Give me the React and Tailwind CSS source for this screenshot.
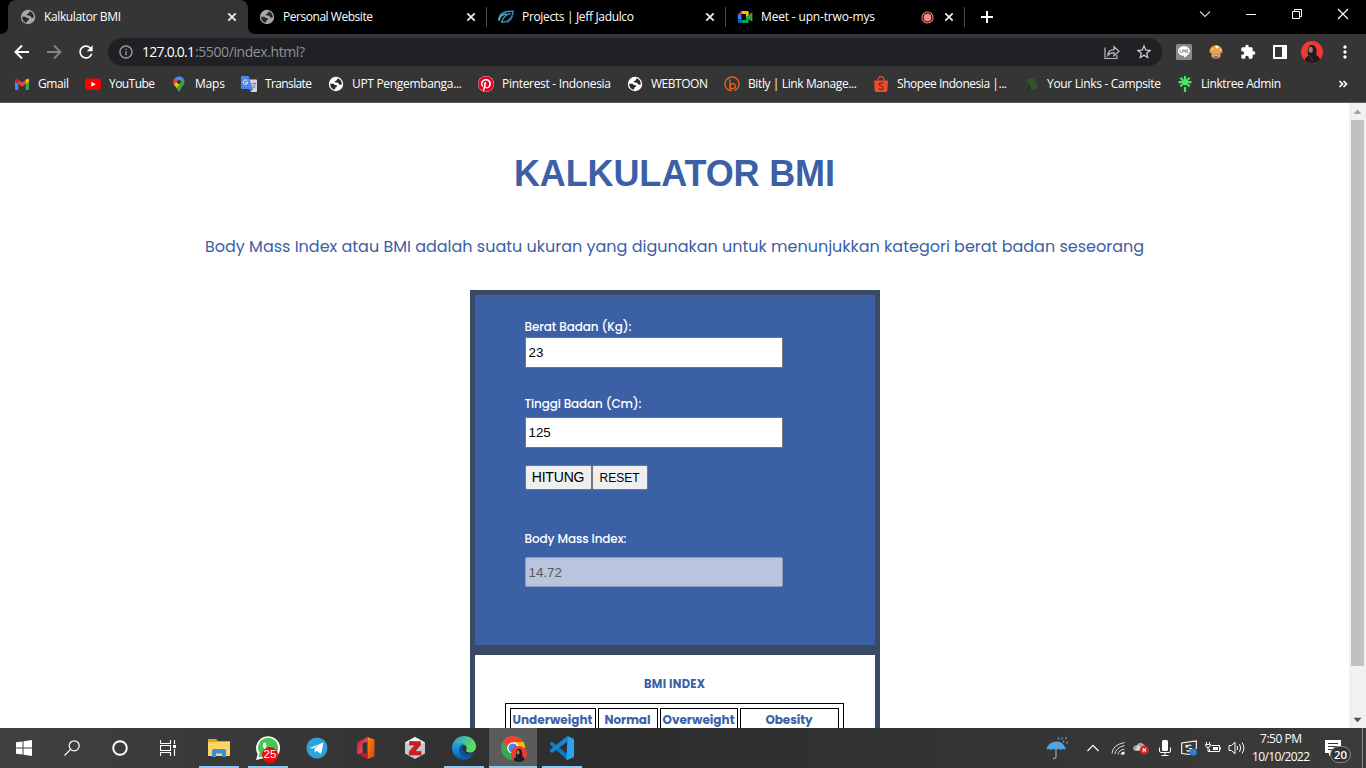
import React, { useLayoutEffect, useRef, useState } from "react";
import { MdStarBorder, MdExtension, MdMoreVert, MdRefresh, MdInfoOutline } from "react-icons/md";
import { FaPinterest, FaWhatsapp } from "react-icons/fa";

const UI = "font-['Segoe_UI','Open_Sans',sans-serif]";
const GEO = "font-[Poppins,Inter,sans-serif]";

// Spreads its text evenly over the width given by the class.
function Fit({ className = "", children }) {
  const box = useRef(null);
  const text = useRef(null);
  const [gap, setGap] = useState(0);
  useLayoutEffect(() => {
    const natural = text.current.getBoundingClientRect().width;
    const n = text.current.textContent.length;
    setGap((box.current.getBoundingClientRect().width - natural) / Math.max(1, n - 1));
  }, []);
  return (
    <span ref={box} className={"block shrink-0 whitespace-nowrap " + className}>
      <span ref={text} style={{ letterSpacing: gap + "px" }}>{children}</span>
    </span>
  );
}

const Globe = ({ className = "" }) => (
  <svg viewBox="0 0 16 16" className={"size-4 shrink-0 " + className}>
    <circle cx="8" cy="8" r="7.200" fill="currentColor" />
    <path d="M9.300 2.300Q13.500 3.500 13.900 8 12.800 9.300 11.200 8.600 10.800 6.600 8.800 6.500L6.800 6.300Q6.300 5 8 4.700 9.600 4.300 9.300 2.300z" fill="#2b2b2b" />
    <path d="M2.100 7.700H5.500Q6.500 9.200 8.500 9.200 9.600 9.600 8.900 10.800 7.200 11 7.300 12.300L6.700 13.800Q2.300 12.700 2.100 7.700z" fill="#2b2b2b" />
  </svg>
);

const Close = () => (
  <svg viewBox="0 0 16 16" className="size-4 shrink-0" stroke="#f1f1f1" strokeWidth="1.7">
    <path d="M4.3 4.3l7.4 7.4M11.7 4.3l-7.4 7.4" />
  </svg>
);

const JeffIcon = () => (
  <svg viewBox="0 0 16 16" className="size-4 shrink-0" fill="none" stroke="#3b9cc4" strokeWidth="1.3">
    <path d="M.6 10.500C1 5 6 2 15.200 2.200C14.500 9 10 13.500 3.500 13.200C5 8 8.500 5.500 12.500 4.500" />
    <path d="M1 12C1.500 8 4 5.300 8.500 5" stroke="#58bdd0" />
    <path d="M9 13.500C12.500 12 14.600 8.500 15 4" stroke="#2f6fb0" />
  </svg>
);

const MeetIcon = () => (
  <svg viewBox="0 0 16 16" className="size-4 shrink-0">
    <path d="M4.500 2H10.500a1.200 1.200 0 0 1 1.200 1.200V8H9V5H4.500z" fill="#ffba00" />
    <path d="M4.500 2v3.500H.8z" fill="#ea4335" />
    <path d="M.8 5.500H4.500v5H.8z" fill="#2684fc" />
    <path d="M.8 10.500H4.500V14H2A1.200 1.200 0 0 1 .8 12.800z" fill="#0066da" />
    <path d="M4.500 11H9V8l2.700-1.500v6.300A1.200 1.200 0 0 1 10.500 14h-6z" fill="#00ac47" />
    <path d="M11.700 6L14.800 3.600q.6-.4.600.3v8.200q0 .7-.6.300L9 8z" fill="#2f9e4d" />
  </svg>
);

const RecordIcon = () => (
  <svg viewBox="0 0 14 14" className="size-[13px] shrink-0">
    <circle cx="7" cy="7" r="6" fill="none" stroke="#f28b82" strokeWidth="1.100" />
    <circle cx="7" cy="7" r="4.200" fill="#f28b82" />
  </svg>
);

function Tab({ icon, title, width, record }) {
  return (
    <div className="flex h-full w-[239px] shrink-0 items-center pl-[11px]">
      {icon}
      <Fit className={"ml-2 text-[12px] leading-4 text-white " + width}>{title}</Fit>
      <div className="ml-auto flex items-center gap-[7px] pr-[7px]">
        {record && <RecordIcon />}
        <Close />
      </div>
      <div className="h-5 w-px bg-[#4a4a4a]" />
    </div>
  );
}

function TabStrip() {
  return (
    <div className="flex h-[34px] shrink-0 bg-black text-white">
      <div className="flex h-full w-2 items-end bg-[#353535]"><div className="size-full rounded-br-[7px] bg-black" /></div>
      <div className="flex h-full w-[240px] items-center rounded-t-[8px] bg-[#353535] pl-3">
        <Globe className="text-[#a3a7ae]" />
        <Fit className="ml-2 w-[77px] text-[12px] leading-4">Kalkulator BMI</Fit>
        <div className="ml-auto pr-2"><Close /></div>
      </div>
      <div className="flex bg-[#353535]"><div className="h-full w-[239px] rounded-bl-[7px] bg-black">
        <Tab icon={<Globe className="text-[#a3a7ae]" />} title="Personal Website" width="w-[90px]" />
      </div></div>
      <Tab icon={<JeffIcon />} title="Projects | Jeff Jadulco" width="w-[112px]" />
      <Tab icon={<MeetIcon />} title="Meet - upn-trwo-mys" width="w-[114px]" record />
      <svg viewBox="0 0 16 16" className="ml-[14px] mt-[9px] size-4" stroke="#fff" strokeWidth="2"><path d="M2 8h12M8 2v12" /></svg>
      <div className="ml-auto flex h-7 items-center">
        <div className="flex w-[46px] justify-center"><svg viewBox="0 0 12 12" className="size-3" fill="none" stroke="#d5d5d5" strokeWidth="1.100"><path d="M1 3.500l5 5 5-5" /></svg></div>
        <div className="flex w-[46px] justify-center"><svg viewBox="0 0 12 12" className="size-3" stroke="#fff"><path d="M1 6.500h10" /></svg></div>
        <div className="flex w-[46px] justify-center"><svg viewBox="0 0 12 12" className="size-3" fill="none" stroke="#fff"><path d="M1.500 3.500h7v7h-7zM3.500 3.500v-2h7v7h-2" /></svg></div>
        <div className="flex w-[46px] justify-center"><svg viewBox="0 0 12 12" className="size-3" stroke="#fff" strokeWidth="1.200"><path d="M1 1l10 10M11 1L1 11" /></svg></div>
      </div>
    </div>
  );
}

const LineIcon = () => (
  <svg viewBox="0 0 16 16" className="size-4">
    <rect width="16" height="16" rx="1.500" fill="#8a8a8a" />
    <path d="M8 2.200c3.300 0 6 2.100 6 4.800 0 2-2.200 4.200-6 6.700v-1.900C4.700 11.800 2 9.700 2 7s2.700-4.800 6-4.800z" fill="#fff" />
    <path d="M4 5.500v3h1.500M6.500 5.500v3M7.800 8.500v-3l1.800 3v-3M12.300 5.700h-1.400v2.700h1.400M10.900 7h1.200" stroke="#777" strokeWidth=".7" fill="none" />
  </svg>
);

const MushroomIcon = () => (
  <svg viewBox="0 0 16 16" className="size-4">
    <path d="M3.500 7h9v4.200a4.500 3.500 0 0 1-9 0z" fill="#e8a878" />
    <path d="M1.500 8C1.500 3.800 4.500 1.200 8 1.200s6.500 2.600 6.500 6.800q0 1-1 1-2-1.600-5.500-1.600T2.500 9q-1 0-1-1z" fill="#f0a035" />
    <circle cx="9" cy="3" r="1.600" fill="#fff3d8" /><circle cx="4.500" cy="5.500" r="1" fill="#ffe0a0" /><circle cx="12.300" cy="5.800" r="1" fill="#ffe0a0" />
    <circle cx="6.200" cy="10" r="1.100" fill="#7f96a0" /><circle cx="9.800" cy="10" r="1.100" fill="#7f96a0" />
    <path d="M5 13q3-1.800 6 0l-1.200 1.500H6z" fill="#a56636" />
  </svg>
);

function Portrait({ className }) {
  return (
    <svg viewBox="0 0 22 22" className={className}>
      <defs><clipPath id="face"><circle cx="11" cy="11" r="11" /></clipPath></defs>
      <g clipPath="url(#face)">
        <rect width="22" height="22" fill="#f0392f" />
        <path d="M3 22q0-5 4-7Q5.500 4 11 3.700q5.200.3 4.500 10.500 4 2 4 7.800z" fill="#1e1b22" />
        <ellipse cx="9.700" cy="8.800" rx="2.100" ry="3" fill="#a87c6d" />
        <path d="M7 14q3 1 5 6" stroke="#41414b" fill="none" />
      </g>
    </svg>
  );
}

function Toolbar() {
  return (
    <div className="flex h-9 shrink-0 items-center bg-[#353535] pl-[13px]">
      <svg viewBox="0 0 18 18" className="size-[18px]" fill="none" stroke="#fff" strokeWidth="2"><path d="M16 9H3M9 2.500L2.500 9 9 15.500" /></svg>
      <svg viewBox="0 0 18 18" className="ml-[14px] size-[18px]" fill="none" stroke="#858585" strokeWidth="1.800"><path d="M2 9h13M9 2.500L15.500 9 9 15.500" /></svg>
      <MdRefresh className="ml-[13px] size-5 text-white" />
      <div className="ml-3 flex h-7 w-[1054px] items-center rounded-full bg-[#202124] pl-[10px] pr-[9px]">
        <MdInfoOutline className="size-4 text-[#9aa0a6]" />
        <Fit className="ml-2 w-[53px] text-[14px] leading-5 text-white">127.0.0.1</Fit>
        <Fit className="w-[110px] text-[14px] leading-5 text-[#8f9398]">:5500/index.html?</Fit>
        <svg viewBox="0 0 18 18" className="ml-auto size-[18px]" fill="none" stroke="#b6b8bb" strokeWidth="1.200">
          <path d="M2 4.500v11h12V12" /><path d="M4.800 12.500C5 8.500 7.500 6.600 11 6.600V3.700l5 4.600-5 4.500V9.700c-2.700 0-4.700.6-6.200 2.800z" />
        </svg>
        <MdStarBorder className="ml-[14px] size-[18px] text-[#d0d2d5]" />
      </div>
      <div className="ml-[14px] flex items-center gap-4">
        <LineIcon /><MushroomIcon /><MdExtension className="size-4 text-white" />
        <svg viewBox="0 0 16 16" className="size-4"><path d="M1 1h14v14H1z" fill="#fff" /><path d="M3 3h7v10H3z" fill="#353535" /></svg>
      </div>
      <Portrait className="ml-[13px] size-[22px]" />
      <MdMoreVert className="ml-3 size-5 text-white" />
    </div>
  );
}

const GmailIcon = () => (
  <svg viewBox="0 0 16 16" className="size-4">
    <path d="M1 4.500L4.300 7v7H2a1 1 0 0 1-1-1z" fill="#4285f4" /><path d="M15 4.500L11.700 7v7H14a1 1 0 0 0 1-1z" fill="#34a853" />
    <path d="M4.300 3.800L8 6.600l3.700-2.800v4L8 10.700 4.300 7.900z" fill="#ea4335" />
    <path d="M1 4.300C1 2.500 2.800 2.400 4.300 3.800v4.100L1 5.500z" fill="#c5221f" /><path d="M15 4.300c0-1.800-1.800-1.900-3.300-.5v4.100L15 5.500z" fill="#fbbc04" />
  </svg>
);
const YoutubeIcon = () => <svg viewBox="0 0 16 16" className="size-4"><rect y="2.500" width="16" height="11.500" rx="3" fill="#f00" /><path d="M6.300 5.700v5.100l4.500-2.550z" fill="#fff" /></svg>;
const MapsIcon = () => (
  <svg viewBox="0 0 16 16" className="size-4">
    <defs><clipPath id="pin"><path d="M8 .5a5.500 5.500 0 0 1 5.500 5.500c0 3-3 4.500-4.400 8.500q-.3 1-1.100 1t-1.100-1C5.500 10.500 2.500 9 2.500 6A5.500 5.500 0 0 1 8 .5z" /></clipPath></defs>
    <g clipPath="url(#pin)"><path d="M0 0h16v16H0z" fill="#34a853" /><path d="M0 13L15 0v-2H0z" fill="#4285f4" /><path d="M0 3.500L3.800 2.500 7 6 3 11H0z" fill="#ea4335" /><path d="M2 8.500L6.500 6 9 8l-4.500 5z" fill="#fbbc04" /><path d="M8 0l-2 5 3-1 4-3z" fill="#4d90f5" /></g>
    <circle cx="8" cy="6" r="2" fill="#353535" />
  </svg>
);
const TranslateIcon = () => (
  <svg viewBox="0 0 16 16" className="size-4">
    <path d="M6 3.500h9a1 1 0 0 1 1 1V15a1 1 0 0 1-1 1H9.500z" fill="#d5d7db" />
    <path d="M1 0h6.500L12 13H1a1 1 0 0 1-1-1V1a1 1 0 0 1 1-1z" fill="#4c87ee" /><path d="M8 13h4l-2.500 3z" fill="#3367d6" />
    <path d="M6.300 4.900a2.200 2.200 0 1 0 .4 1.700H4.600" stroke="#fff" fill="none" strokeWidth="1" /><path d="M10.500 7.500h5M13 6.300v1.200M14.600 7.500q-.8 3-3 4.500M11.500 9q1 2 3.200 3" stroke="#6d7a86" fill="none" strokeWidth=".8" />
  </svg>
);
const PinterestIcon = () => <span className="block size-4 rounded-full bg-white"><FaPinterest className="size-4 text-[#e60023]" /></span>;
const BitlyIcon = () => (
  <svg viewBox="0 0 16 16" className="size-4" fill="none" stroke="#ee6123" strokeWidth="1.300">
    <path d="M5.500 14.600A7.100 7.100 0 1 1 10.500 14.600" /><path d="M5 3.600q1 .2 1 1.600v8.300q0 1.200 2 1.200" /><circle cx="8.700" cy="10.200" r="2.500" />
  </svg>
);
const ShopeeIcon = () => (
  <svg viewBox="0 0 16 16" className="size-4" fill="none">
    <path d="M1 4.500h14l-.7 10.300q-.1 1.200-1.300 1.200H3q-1.200 0-1.300-1.200z" fill="#ee4d2d" /><path d="M5 4.500C5 2 6.200.7 8 .7S11 2 11 4.500" stroke="#ee4d2d" strokeWidth="1.200" />
    <path d="M10.300 7.600Q8.500 6.400 6.900 7.200c-1.100.7-.8 2 .9 2.600 2 .7 2.700 1.300 2.400 2.500-.4 1.500-2.600 1.700-4.500.3" stroke="#712a1f" strokeWidth="1.200" />
  </svg>
);
const TentIcon = () => <svg viewBox="0 0 16 16" className="size-4"><path d="M4.500 3.200l6-.7q2.800 3 4.500 9.500l-4 1.700L1.500 13Q4 9 4.500 3.200z" fill="#36502f" /><path d="M5 3.500q.5 6 5.500 10L1.500 13Q4.500 9 5 3.500z" fill="#2c4230" /><path d="M4 13q1.500-2 1.500-5l2 5.300z" fill="#1e2a21" /></svg>;
const LinktreeIcon = () => <svg viewBox="0 0 16 16" className="size-4" stroke="#43e660" strokeWidth="2.200"><path d="M8 0v9.200M1.500 6.100h13M3.300 1.700l9.400 8.800M12.700 1.700l-9.400 8.800M8 11v5" /></svg>;

const bookmarks = [
  [GmailIcon, "Gmail", "w-[31px]"],
  [YoutubeIcon, "YouTube", "w-[46px]"],
  [MapsIcon, "Maps", "w-[30px]"],
  [TranslateIcon, "Translate", "w-[47px]"],
  [Globe, "UPT Pengembanga...", "w-[110px]"],
  [PinterestIcon, "Pinterest - Indonesia", "w-[109px]"],
  [Globe, "WEBTOON", "w-[57px]"],
  [BitlyIcon, "Bitly | Link Manage...", "w-[109px]"],
  [ShopeeIcon, "Shopee Indonesia |...", "w-[110px]"],
  [TentIcon, "Your Links - Campsite", "w-[114px]"],
  [LinktreeIcon, "Linktree Admin", "w-[80px]"],
];

function BookmarksBar() {
  return (
    <div className="flex h-[33px] shrink-0 items-center gap-4 border-b border-[#5c5c5c] bg-[#353535] pb-1 pl-[14px] pr-[18px] text-white">
      {bookmarks.map(([Icon, label, width]) => (
        <div key={label} className="flex items-center gap-2">
          <Icon />
          <Fit className={"text-[12px] leading-4 " + width}>{label}</Fit>
        </div>
      ))}
      <svg viewBox="0 0 10 10" className="ml-auto size-[10px]" fill="none" stroke="#fff" strokeWidth="1.700"><path d="M1.500 2l3 3-3 3M5.500 2l3 3-3 3" /></svg>
    </div>
  );
}

function Calculator() {
  const label = GEO + " text-[12px] leading-4 font-medium text-white";
  const input = "block h-[31px] w-[258px] border border-[#767676] bg-white pb-px pl-[3px] text-[13.33px] text-black";
  const button = "h-[25px] rounded-[2px] border border-[#767676] bg-[#efefef] text-black";
  return (
    <div className="h-[360px] w-[410px] shrink-0 border-5 border-[#3b4a63] bg-[#3b60a6] pl-[50px] pt-[24px] font-['Liberation_Sans',Arial,sans-serif]">
      <Fit className={"w-[107px] " + label}>Berat Badan (Kg):</Fit>
      <input className={input + " mt-[2px]"} defaultValue="23" />
      <Fit className={"mt-[28px] w-[117px] " + label}>Tinggi Badan (Cm):</Fit>
      <input className={input + " mt-[5px]"} defaultValue="125" />
      <div className="mt-[17px] flex">
        <button className={button + " w-[67px] text-[14px] tracking-[-0.2px]"}>HITUNG</button>
        <button className={button + " w-[56px] text-[12px]"}>RESET</button>
      </div>
      <Fit className={"mt-[41px] w-[102px] " + label}>Body Mass Index:</Fit>
      <input disabled className="mt-[10px] block h-[30px] w-[258px] rounded-[2px] border border-[#8e9cbd] bg-[#b9c4dd] pl-[3px] text-[13.33px] text-[#585a5e]" defaultValue="14.72" />
    </div>
  );
}

function IndexTable() {
  const cell = "flex h-[26px] justify-center border border-black pt-[3px]";
  return (
    <div className={"h-[200px] w-[410px] shrink-0 border-5 border-[#3b4a63] px-[30px] pt-[21px] font-bold text-[#3b60a6] " + GEO}>
      <div className="flex justify-center"><Fit className="w-[61px] text-[11.5px] leading-4">BMI INDEX</Fit></div>
      <div className="mt-[11px] flex w-[339px] gap-[2px] border border-black p-1 text-[12px] leading-4">
        <div className={cell + " w-[86px]"}><Fit className="w-[80px]">Underweight</Fit></div>
        <div className={cell + " w-[60px]"}><Fit className="w-[46px]">Normal</Fit></div>
        <div className={cell + " w-[78px]"}><Fit className="w-[72px]">Overweight</Fit></div>
        <div className={cell + " w-[99px]"}><Fit className="w-[47px]">Obesity</Fit></div>
      </div>
    </div>
  );
}

function Page() {
  return (
    <div className="flex h-[625px] shrink-0 overflow-hidden bg-white">
      <main className="flex w-[1349px] flex-col items-center pt-[51px] text-[#3b60a6]">
        <h1><Fit className="w-[321px] font-['Liberation_Sans',Arial,sans-serif] text-[36px] leading-[40px] font-bold">KALKULATOR BMI</Fit></h1>
        <p><Fit className={"mt-[41px] mb-[31px] w-[939px] text-[16px] leading-6 " + GEO}>Body Mass Index atau BMI adalah suatu ukuran yang digunakan untuk menunjukkan kategori berat badan seseorang</Fit></p>
        <Calculator />
        <IndexTable />
      </main>
      <div className="flex w-[17px] flex-col items-center bg-[#f1f1f1]">
        <svg viewBox="0 0 17 17" className="size-[17px]"><path d="M8.500 6.500L12.500 11h-8z" fill="#a3a3a3" /></svg>
        <div className="h-[546px] w-[13px] bg-[#c1c1c1]" />
        <svg viewBox="0 0 17 17" className="mt-auto size-[17px]"><path d="M8.500 11.200L12.500 6.800h-8z" fill="#505050" /></svg>
      </div>
    </div>
  );
}

const ExplorerIcon = () => (
  <svg viewBox="0 0 24 24" className="size-6"><path d="M1 3h8l2 2h12v3H1z" fill="#e5a21a" /><path d="M1 6h22v14H1z" fill="#fcd462" /><path d="M5 21v-6q0-2 2-2h10q2 0 2 2v6h-4v-3.500H9V21z" fill="#3a8fdb" /></svg>
);
const TelegramIcon = () => (
  <svg viewBox="0 0 22 22" className="size-[22px]"><circle cx="11" cy="11" r="10.500" fill="#2ca3dc" /><path d="M3.500 11L16.800 5.800q.8-.2.600.8L15.400 16q-.2.900-1.100.4l-3.500-2.600-1.900 1.900-.5-4 6-5.300-7.300 5z" fill="#fff" /></svg>
);
const OfficeIcon = () => (
  <svg viewBox="0 0 24 24" className="size-6">
    <defs><linearGradient id="of" y2="1"><stop stopColor="#b5121a" /><stop offset="1" stopColor="#ff6b9c" /></linearGradient><linearGradient id="oo" y2="1"><stop stopColor="#ff8a00" /><stop offset="1" stopColor="#dc3e10" /></linearGradient></defs>
    <path d="M3 6.500L13.500 1v4.500L8.500 7.500v9L3 18z" fill="url(#of)" /><path d="M13.500 1L20.500 3.500v17L13.500 23z" fill="url(#oo)" /><path d="M4 18.300l4.500-1.800 5 1.500v5z" fill="#c61b26" />
  </svg>
);
const ZoteroIcon = () => (
  <svg viewBox="0 0 24 24" className="size-6"><path d="M12 1l10 5.500v11L12 23 2 17.500v-11z" fill="#c9c9c9" /><path d="M12 1l10 5.500L12 9 2 6.500z" fill="#f3f3f3" /><path d="M6.500 5.500h11v3.500L12 15.500h6V19H6.300v-3.500L12 9H6.500z" fill="#cc1f22" stroke="#8a1015" strokeWidth=".5" /></svg>
);
const EdgeIcon = () => (
  <svg viewBox="0 0 24 24" className="size-6">
    <defs><linearGradient id="eg" y2=".4"><stop stopColor="#2697df" /><stop offset="1" stopColor="#5ee05c" /></linearGradient><linearGradient id="eb" x2="0" y2="1"><stop stopColor="#2aa7e4" /><stop offset="1" stopColor="#0a55ac" /></linearGradient></defs>
    <path d="M0 12C.5 4 6 0 12 0c7 0 12 5 12 10.500 0 4-3 6-6.300 6-2.700 0-4.300-1-3.500-2.200 1.700-3-1-6.300-5.200-6.300C5 8 2 9.500 0 12z" fill="url(#eg)" />
    <path d="M0 12c1.500-3.700 4.500-5.500 8.300-5.500 2 0 4 .8 4.700 2C9 8 6.500 12 8 16c1.500 4.500 7 6.500 12 4-4 5-11 5-15.500 1.500Q0 18 0 12z" fill="url(#eb)" />
    <path d="M8 16c-1.300-3.500.5-6.500 3.500-7.500-2.500 5 1.500 9.500 6.500 9.500 2 0 3.200-.6 4-1-.5 1.500-1.200 2.300-2 3-5 2.500-10.500.5-12-4z" fill="#124f94" />
  </svg>
);
const ChromeIcon = () => (
  <svg viewBox="0 0 24 24" className="size-6"><circle cx="12" cy="12" r="12" fill="#34a853" /><path d="M1.600 6A12 12 0 0 1 22.400 6L12 12H7z" fill="#ea4335" /><path d="M22.400 6A12 12 0 0 1 12 24l5-9L12 6z" fill="#fbbc04" /><circle cx="12" cy="12" r="5.800" fill="#fff" /><circle cx="12" cy="12" r="4.500" fill="#4285f4" /></svg>
);
const CodeIcon = () => (
  <svg viewBox="0 0 24 24" className="size-6"><path d="M0 7l2-1.500 15.500 13V24L0 8.700z" fill="#087bc5" /><path d="M0 15.500l2 1.500L17.500 5.500V0L0 13.800z" fill="#1685ce" /><path d="M17.500 0L24 3v18l-6.500 3-1-.5z" fill="#25a4f3" /></svg>
);

function TaskButton({ children, underline, full, active }) {
  return (
    <div className={"relative flex h-10 w-12 items-center justify-center " + (active ? "bg-[#5b5b5b]" : "")}>
      {children}
      {underline && <div className={"absolute bottom-0 h-[2px] bg-[#91c8f0] " + (full ? "w-12" : "w-10")} />}
    </div>
  );
}

const Tray = ({ children }) => <div className="flex w-6 shrink-0 justify-center">{children}</div>;

function Taskbar() {
  return (
    <div className="flex h-10 shrink-0 items-center bg-linear-to-r from-[#404040] via-[#2d2d2d] via-45% to-[#3b3b3b] text-white">
      <TaskButton><svg viewBox="0 0 16 16" className="size-4" fill="#fff"><path d="M0 2.300L6.500 1.400v6.100H0zM7.500 1.200L16 0v7.500H7.500zM0 8.500h6.500v6.100L0 13.700zM7.500 8.500H16V16l-8.500-1.200z" /></svg></TaskButton>
      <TaskButton><svg viewBox="0 0 16 16" className="size-4" fill="none" stroke="#fff" strokeWidth="1.200"><circle cx="10.200" cy="5.800" r="5" /><path d="M6.600 9.400L.5 15.500" /></svg></TaskButton>
      <TaskButton><svg viewBox="0 0 16 16" className="size-4" fill="none" stroke="#fff" strokeWidth="1.900"><circle cx="8" cy="8" r="6.800" /></svg></TaskButton>
      <TaskButton><svg viewBox="0 0 16 16" className="size-4" fill="none" stroke="#fff" strokeWidth="1.100"><path d="M.5 0v3.500h10V0M.5 16v-3.500h10V16M.5 5.500h10v5H.5zM14.500 0v4M14.500 9v7" /><path d="M13 5h3v3h-3z" fill="#fff" stroke="none" /></svg></TaskButton>
      <div className="ml-[3px] flex gap-px">
        <TaskButton underline><ExplorerIcon /></TaskButton>
        <TaskButton underline>
          <svg viewBox="0 0 24 24" className="size-6"><path d="M0 24l1.700-6A12 11.800 0 1 1 6.300 22.400z" fill="#fff" /><path d="M2.500 21.500l1.200-4.300a10 10 0 1 1 3.200 3.100z" fill="#45c655" /><path d="M8 6.500q-2.500 2 0 6t7 5.500q2.500-.3 3-2.500l-2.800-1.500-1.400 1.500q-3-1.300-4.300-4l1.200-1.500L9.400 6.500z" fill="#fff" /></svg>
          <span className="absolute bottom-[5px] left-[18px] flex size-4 items-center justify-center rounded-full bg-[#f00b0b] font-['Liberation_Sans',sans-serif] text-[11.5px] leading-none">25</span>
        </TaskButton>
        <TaskButton><TelegramIcon /></TaskButton>
        <TaskButton><OfficeIcon /></TaskButton>
        <TaskButton><ZoteroIcon /></TaskButton>
        <TaskButton underline><EdgeIcon /></TaskButton>
        <TaskButton underline full active><ChromeIcon /><Portrait className="absolute bottom-[6px] left-[22px] size-4" /></TaskButton>
        <TaskButton underline><CodeIcon /></TaskButton>
      </div>
      <svg viewBox="0 0 24 24" className="ml-auto size-6">
        <path d="M1 14Q3 6 11 5.500T21 14q-2.500-2-5 0-2.500-2-5 0-2.500-2-5 0-2.500-2-5 0z" fill="#4da4e5" /><path d="M11 6v14q0 3-3 2.500" stroke="#9b8f96" strokeWidth="1.400" fill="none" />
        <path d="M13 3.500l1-2M16.500 3.500l1-2M20.500 3l1-2M18 6.500l1-2M21.500 7.500l1-2" stroke="#4da4e5" strokeWidth="1.200" />
      </svg>
      <div className="ml-3 flex items-center">
        <Tray><svg viewBox="0 0 12 12" className="size-3" fill="none" stroke="#fff" strokeWidth="1.200"><path d="M.5 9L6 3.300 11.500 9" /></svg></Tray>
        <Tray><svg viewBox="0 0 14 14" className="ml-[2px] size-[14px]" fill="none" stroke="#ddd"><path d="M1 12.500Q1.500 4 13.500 1.500M4 13Q4.500 7 13.500 4.500M7 13.300q.5-3.800 6.500-5.300" /><path d="M9.500 13.500q.5-2.500 4-3v3z" fill="#fff" stroke="none" /></svg></Tray>
        <Tray><svg viewBox="0 0 18 14" className="h-[14px] w-[18px]"><path d="M3.500 10Q0 9 1.500 5.800 3 4 4.500 4.500 7 .5 10.500 2.500q3 1.500 2.500 4l2 3.500z" fill="#aaa" /><path d="M5 4q4 1.500 6 5H4z" fill="#d7d7d7" /><circle cx="12.300" cy="9" r="4.500" fill="#d7262b" /><path d="M10.600 7.300l3.400 3.400M14 7.300l-3.400 3.400" stroke="#fff" strokeWidth="1.200" /></svg></Tray>
        <Tray><svg viewBox="0 0 14 16" className="h-4 w-[14px]" fill="none" stroke="#fff"><rect x="4" y="0" width="6" height="11" rx="1.500" fill="#fff" stroke="none" /><path d="M1.500 7.500v3.500q0 1.500 1.500 1.500h8q1.500 0 1.500-1.500V7.500M7 12.500V15M3.500 15.500h7" /></svg></Tray>
        <Tray><svg viewBox="0 0 16 16" className="size-4" fill="none" stroke="#fff" strokeWidth="1.100"><path d="M9 14.500L.7 13.500V3l14.600-2v8" /><path d="M10.500 5.500q-3.500-1.500-5 1.500M5 4.700V7h2.500M5.500 10.500q3 1.500 4.500-1M10.500 11V8.500H8" /><circle cx="12.200" cy="12.200" r="3.600" fill="#2d7fd3" stroke="none" /></svg></Tray>
        <Tray><svg viewBox="0 0 16 14" className="h-[14px] w-4" fill="none" stroke="#fff"><path d="M6.500 4.500h8v6h-10V8M15.500 6.500v2" /><path d="M8 6h5v3H8z" fill="#fff" stroke="none" /><path d="M1.500 1v2.500M4.500 1v2.500M.5 3.500h5q0 3-2.500 3T.5 3.500zM3 6.500v4h2" /></svg></Tray>
        <Tray><svg viewBox="0 0 18 14" className="h-[14px] w-[18px]" fill="none" stroke="#fff" strokeWidth="1"><path d="M1 4.500h2.500L7 1.200v11.600L3.500 9.500H1zM9 5q1.200 2 0 4M11.500 3.200q2.500 3.800 0 7.600M14 1.500q3.800 5.500 0 11" /></svg></Tray>
      </div>
      <div className="ml-[3px] flex w-[58px] flex-col items-center text-[12px] leading-[18px]">
        <Fit className="w-[42px]">7:50 PM</Fit>
        <Fit className="w-[58px]">10/10/2022</Fit>
      </div>
      <div className="relative ml-[14px] h-10 w-[39px] border-r border-[#878787]">
        <svg viewBox="0 0 16 17" className="ml-px mt-[12px] h-[17px] w-4"><path d="M0 0h16v13H7l-3 3v-3H0z" fill="#fff" /><path d="M3 3.500h10M3 6.500h10M3 9.500h10" stroke="#333" /></svg>
        <span className="absolute left-[6px] top-[18px] flex h-[17px] w-[21px] items-center justify-center rounded-full border border-[#8d8d8d] bg-[#333] text-[11.5px] leading-none font-semibold">20</span>
      </div>
      <div className="w-[3px]" />
    </div>
  );
}

export default function App() {
  return (
    <div className={"flex h-[768px] w-[1366px] flex-col overflow-hidden " + UI}>
      <TabStrip />
      <Toolbar />
      <BookmarksBar />
      <Page />
      <Taskbar />
    </div>
  );
}
